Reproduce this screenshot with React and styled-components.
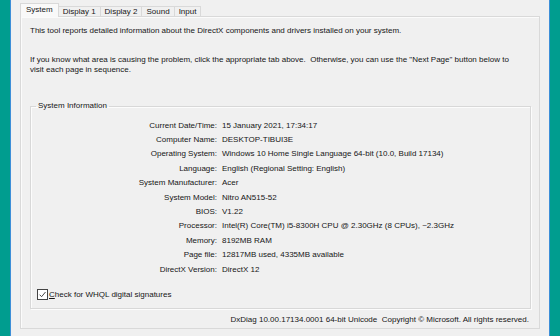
import React from "react";
import styled, { createGlobalStyle } from "styled-components";

const GlobalStyle = createGlobalStyle`
  html, body {
    margin: 0;
    padding: 0;
    background: #009d8f;
  }
  body {
    font-family: "Liberation Sans", Arial, sans-serif;
    font-size: 8px;
    color: #161616;
  }
`;

const info = [
  ["Current Date/Time", "15 January 2021, 17:34:17"],
  ["Computer Name", "DESKTOP-TIBUI3E"],
  ["Operating System", "Windows 10 Home Single Language 64-bit (10.0, Build 17134)"],
  ["Language", "English (Regional Setting: English)"],
  ["System Manufacturer", "Acer"],
  ["System Model", "Nitro AN515-52"],
  ["BIOS", "V1.22"],
  ["Processor", "Intel(R) Core(TM) i5-8300H CPU @ 2.30GHz (8 CPUs), ~2.3GHz"],
  ["Memory", "8192MB RAM"],
  ["Page file", "12817MB used, 4335MB available"],
  ["DirectX Version", "DirectX 12"],
];

const tabs = ["System", "Display 1", "Display 2", "Sound", "Input"];

const App = () => {
  return (
    <>
      <GlobalStyle />
      <Desktop>
        <Window>
          <TabStrip>
            {tabs.map((t, i) => (
              <Tab key={t} active={i === 0}>
                {t}
              </Tab>
            ))}
          </TabStrip>
          <Panel>
            <Intro>
              This tool reports detailed information about the DirectX
              components and drivers installed on your system.
            </Intro>
            <Intro2>
              If you know what area is causing the problem, click the
              appropriate tab above.&nbsp; Otherwise, you can use the "Next
              Page" button below to
              <br />
              visit each page in sequence.
            </Intro2>
            <GroupBox>
              <legend>System Information</legend>
              <InfoGrid>
                {info.map(([k, v]) => (
                  <React.Fragment key={k}>
                    <Label>{k}:</Label>
                    <Value>{v}</Value>
                  </React.Fragment>
                ))}
              </InfoGrid>
              <CheckRow>
                <CheckBox>
                  <svg width="9" height="9" viewBox="0 0 9 9">
                    <path
                      d="M1.6 4.7 L3.6 6.7 L7.5 2"
                      fill="none"
                      stroke="#333"
                      strokeWidth="0.9"
                    />
                  </svg>
                </CheckBox>
                <span>
                  <u>C</u>heck for WHQL digital signatures
                </span>
              </CheckRow>
            </GroupBox>
            <Footer>
              DxDiag 10.00.17134.0001 64-bit Unicode&nbsp; Copyright ©
              Microsoft. All rights reserved.
            </Footer>
          </Panel>
        </Window>
      </Desktop>
    </>
  );
};

const Desktop = styled.div`
  width: 560px;
  height: 336px;
  display: flex;
  overflow: hidden;
`;

const Window = styled.div`
  margin-left: 10px;
  width: 540px;
  height: 336px;
  box-sizing: border-box;
  border-left: 1px solid #3d8fd8;
  border-right: 1px solid #3d8fd8;
  background: #f0f0f0;
  padding: 3px 9px 0 9px;
  display: flex;
  flex-direction: column;
`;

const TabStrip = styled.div`
  display: flex;
  align-items: flex-end;
  height: 14px;
  margin-bottom: -1px;
  position: relative;
  z-index: 1;
`;

const Tab = styled.div`
  box-sizing: border-box;
  height: ${(p) => (p.active ? "14px" : "11px")};
  padding: 0 ${(p) => (p.active ? "5px" : "4px")};
  margin-left: ${(p) => (p.active ? "0" : "-1px")};
  line-height: ${(p) => (p.active ? "12px" : "10px")};
  border: 1px solid #d9d9d9;
  border-bottom: ${(p) => (p.active ? "none" : "1px solid #d9d9d9")};
  background: ${(p) => (p.active ? "#f9f9f9" : "#f0f0f0")};
  white-space: nowrap;
  &:first-child {
    margin-left: 0;
  }
`;

const Panel = styled.div`
  box-sizing: border-box;
  width: 520px;
  height: 313px;
  border: 1px solid #d9d9d9;
  background: #f0f0f0;
  box-shadow: inset 1px 1px 0 #fbfbfb;
  padding: 9px 10px 0 9px;
  display: flex;
  flex-direction: column;
`;

const Intro = styled.p`
  margin: 0;
  line-height: 10px;
`;

const Intro2 = styled.p`
  margin: 19px 0 0 0;
  line-height: 10px;
`;

const GroupBox = styled.fieldset`
  margin: 26px 0 0 0;
  width: 501px;
  height: 208px;
  box-sizing: border-box;
  border: 1px solid #d8d8d8;
  box-shadow: inset 1px 1px 0 #fcfcfc, 1px 1px 0 #fcfcfc;
  padding: 0 6px 0 6px;
  legend {
    padding: 0 2px;
    margin-left: -1px;
    line-height: 10px;
  }
`;

const InfoGrid = styled.div`
  display: grid;
  grid-template-columns: 180px 1fr;
  grid-auto-rows: 14.4px;
  column-gap: 5px;
  align-items: center;
  margin-top: 7px;
`;

const Label = styled.div`
  text-align: right;
  white-space: nowrap;
`;

const Value = styled.div`
  white-space: nowrap;
`;

const CheckRow = styled.div`
  display: flex;
  align-items: center;
  gap: 1px;
  margin-top: 13px;
`;

const CheckBox = styled.span`
  width: 11px;
  height: 11px;
  box-sizing: border-box;
  border: 1px solid #444;
  background: #fff;
  display: flex;
  align-items: center;
  justify-content: center;
`;

const Footer = styled.div`
  margin-top: 6px;
  text-align: right;
  line-height: 10px;
`;

export default App;
